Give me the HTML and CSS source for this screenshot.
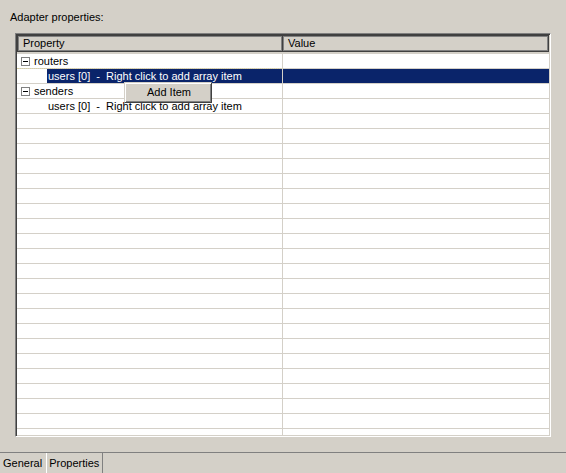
FILE: index.html
```html
<!DOCTYPE html>
<html lang="en">
<head>
    <meta charset="UTF-8">
    <title>Adapter properties</title>
    <link rel="stylesheet" href="styles.css">
</head>
<body>
    <div class="page">
        <div class="caption">Adapter properties:</div>

        <div class="grid">
            <div class="grid-head">
                <div class="head-cell col-prop">Property</div>
                <div class="head-cell col-value">Value</div>
            </div>
            <div class="grid-body">
                <div class="row">
                    <div class="cell col-prop"><span class="toggle"></span>routers</div>
                    <div class="cell col-value"></div>
                </div>
                <div class="row selected">
                    <div class="cell col-prop child"><span class="sel-text">users [0]&nbsp;&nbsp;-&nbsp;&nbsp;Right click to add array item</span></div>
                    <div class="cell col-value"></div>
                </div>
                <div class="row">
                    <div class="cell col-prop"><span class="toggle"></span>senders</div>
                    <div class="cell col-value"></div>
                </div>
                <div class="row">
                    <div class="cell col-prop child">users [0]&nbsp;&nbsp;-&nbsp;&nbsp;Right click to add array item</div>
                    <div class="cell col-value"></div>
                </div>
                <div class="row"><div class="cell col-prop"></div><div class="cell col-value"></div></div>
                <div class="row"><div class="cell col-prop"></div><div class="cell col-value"></div></div>
                <div class="row"><div class="cell col-prop"></div><div class="cell col-value"></div></div>
                <div class="row"><div class="cell col-prop"></div><div class="cell col-value"></div></div>
                <div class="row"><div class="cell col-prop"></div><div class="cell col-value"></div></div>
                <div class="row"><div class="cell col-prop"></div><div class="cell col-value"></div></div>
                <div class="row"><div class="cell col-prop"></div><div class="cell col-value"></div></div>
                <div class="row"><div class="cell col-prop"></div><div class="cell col-value"></div></div>
                <div class="row"><div class="cell col-prop"></div><div class="cell col-value"></div></div>
                <div class="row"><div class="cell col-prop"></div><div class="cell col-value"></div></div>
                <div class="row"><div class="cell col-prop"></div><div class="cell col-value"></div></div>
                <div class="row"><div class="cell col-prop"></div><div class="cell col-value"></div></div>
                <div class="row"><div class="cell col-prop"></div><div class="cell col-value"></div></div>
                <div class="row"><div class="cell col-prop"></div><div class="cell col-value"></div></div>
                <div class="row"><div class="cell col-prop"></div><div class="cell col-value"></div></div>
                <div class="row"><div class="cell col-prop"></div><div class="cell col-value"></div></div>
                <div class="row"><div class="cell col-prop"></div><div class="cell col-value"></div></div>
                <div class="row"><div class="cell col-prop"></div><div class="cell col-value"></div></div>
                <div class="row"><div class="cell col-prop"></div><div class="cell col-value"></div></div>
                <div class="row"><div class="cell col-prop"></div><div class="cell col-value"></div></div>
                <div class="row"><div class="cell col-prop"></div><div class="cell col-value"></div></div>
                <div class="row"><div class="cell col-prop"></div><div class="cell col-value"></div></div>
            </div>

            <div class="context-menu">
                <div class="menu-item">Add Item</div>
            </div>
        </div>

        <div class="tabs">
            <div class="tab">General</div>
            <div class="tab active">Properties</div>
        </div>
    </div>
</body>
</html>
```

FILE: styles.css
```css
* {
    margin: 0;
    padding: 0;
    box-sizing: border-box;
}

body {
    font-family: 'Liberation Sans', Arial, sans-serif;
    font-size: 11px;
    color: #000;
    background: #d4d0c8;
}

.page {
    height: 473px;
    display: flex;
    flex-direction: column;
}

.caption {
    padding: 10px 0 0 10px;
    height: 33px;
    line-height: 14px;
}

/* sunken grid box */
.grid {
    position: relative;
    margin-left: 15px;
    width: 536px;
    height: 404px;
    border: 1px solid;
    border-color: #808080 #fff #fff #808080;
    box-shadow: inset 1px 1px 0 #404040, inset -1px -1px 0 #d4d0c8;
    padding: 1px;
    background: #fff;
    overflow: hidden;
}

.grid-head {
    display: flex;
    height: 18px;
    background: #d4d0c8;
}

.head-cell {
    border: 1px solid #404040;
    box-shadow: inset 1px 1px 0 #808080, inset -1px -1px 0 #808080;
    padding-left: 5px;
    line-height: 15px;
    height: 17px;
}

.col-prop {
    width: 266px;
}

.col-value {
    flex: 1;
}

.head-cell.col-value {
    border-left: none;
    width: auto;
}

.row {
    display: flex;
    height: 15px;
    border-top: 1px solid #d4d0c8;
}

.cell {
    height: 14px;
    line-height: 14px;
    white-space: nowrap;
    display: flex;
    align-items: center;
}

.cell.col-prop {
    border-right: 1px solid #d4d0c8;
    padding-left: 4px;
}

.cell.child {
    padding-left: 31px;
}

.toggle {
    position: relative;
    width: 9px;
    height: 9px;
    border: 1px solid #808080;
    background: #fff;
    margin-right: 4px;
}

.toggle::after {
    content: "";
    position: absolute;
    left: 1px;
    top: 3px;
    width: 5px;
    height: 1px;
    background: #000;
}

.row.selected {
    background: linear-gradient(to right, #fff 30px, #0a246a 30px);
}

.row.selected .cell {
    color: #fff;
}

.row.selected .sel-text {
    margin-left: -1px;
    padding-left: 1px;
}

.row.selected .col-prop {
    border-top: 1px dotted #d8d0a0;
    margin-top: -1px;
    height: 15px;
}

/* popup menu */
.context-menu {
    position: absolute;
    left: 108px;
    top: 48px;
    width: 88px;
    height: 21px;
    background: #d4d0c8;
    border: 1px solid;
    border-color: #d4d0c8 #404040 #404040 #d4d0c8;
    box-shadow: inset 1px 1px 0 #fff, inset -1px -1px 0 #808080;
}

.menu-item {
    text-align: center;
    line-height: 19px;
    padding-left: 2px;
}

.tabs {
    margin-top: auto;
    height: 21px;
    border-top: 1px solid #808080;
    display: flex;
    padding-left: 2px;
}

.tab {
    padding: 0 3px 0 1px;
    line-height: 20px;
}

.tab.active {
    margin-left: 1px;
    padding: 0 3px 0 2px;
    border-left: 1px solid #fff;
    border-right: 1px solid #808080;
}
```
